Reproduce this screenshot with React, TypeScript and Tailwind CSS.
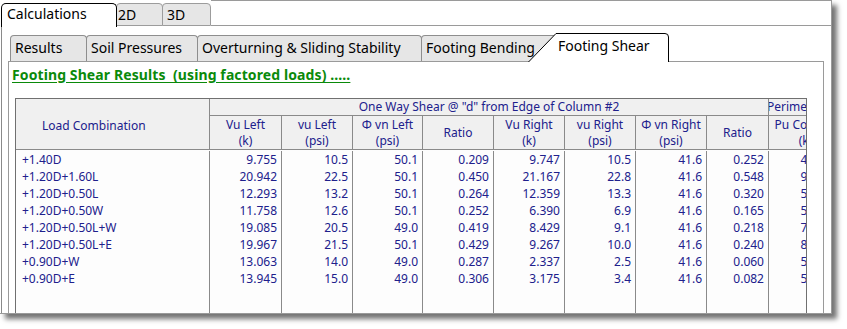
import React from 'react';

const rows: string[][] = [
  ['+1.40D', '9.755', '10.5', '50.1', '0.209', '9.747', '10.5', '41.6', '0.252', '48.631'],
  ['+1.20D+1.60L', '20.942', '22.5', '50.1', '0.450', '21.167', '22.8', '41.6', '0.548', '95.208'],
  ['+1.20D+0.50L', '12.293', '13.2', '50.1', '0.264', '12.359', '13.3', '41.6', '0.320', '56.880'],
  ['+1.20D+0.50W', '11.758', '12.6', '50.1', '0.252', '6.390', '6.9', '41.6', '0.165', '54.330'],
  ['+1.20D+0.50L+W', '19.085', '20.5', '49.0', '0.419', '8.429', '9.1', '41.6', '0.218', '73.114'],
  ['+1.20D+0.50L+E', '19.967', '21.5', '50.1', '0.429', '9.267', '10.0', '41.6', '0.240', '81.902'],
  ['+0.90D+W', '13.063', '14.0', '49.0', '0.287', '2.337', '2.5', '41.6', '0.060', '52.467'],
  ['+0.90D+E', '13.945', '15.0', '49.0', '0.306', '3.175', '3.4', '41.6', '0.082', '55.013'],
];

const heads: [string, string][] = [
  ['Vu Left', '(k)'],
  ['vu Left', '(psi)'],
  ['Φ vn Left', '(psi)'],
  ['Ratio', ''],
  ['Vu Right', '(k)'],
  ['vu Right', '(psi)'],
  ['Φ vn Right', '(psi)'],
  ['Ratio', ''],
  ['Pu Column', '(k)'],
  ['vu Perim', '(psi)'],
];

// widths include each cell's 1px right border
const widths = ['w-[72px]', 'w-[71px]', 'w-[70px]', 'w-[71px]', 'w-[71px]', 'w-[71px]', 'w-[71px]', 'w-[62px]', 'w-[74px]', 'w-[71px]'];

const SubTab: React.FC<{ label: string; w: string; first?: boolean }> = ({ label, w, first }) => (
  <div
    className={`${w} ${first ? 'ml-[2px]' : '-ml-px'} h-[26px] shrink-0 rounded-t-[4px] border border-b-0 border-[#8e8e8e] bg-[#e6e6e6] pl-[4px] pt-[2px] text-[14px] leading-[20px] text-black whitespace-nowrap overflow-hidden`}
  >
    {label}
  </div>
);

const App: React.FC = () => {
  return (
    <div className="w-[847px] h-[329px] bg-white overflow-hidden" style={{ fontFamily: '"Noto Sans", "Open Sans", sans-serif' }}>
      <div className="w-[832px] h-[314px] border-r border-b border-[#9a9a9a] bg-white flex flex-col shadow-[5px_5px_5px_rgba(0,0,0,0.55)]">
        {/* main tabs */}
        <div className="h-[26px] flex items-end shrink-0">
          <div className="ml-px w-[116px] h-[24px] -mb-px relative z-10 rounded-t-[5px] border border-b-0 border-black bg-white pl-[5px] text-[14px] leading-[20px] text-black">
            Calculations
          </div>
          <div className="w-[47px] h-[23px] -ml-px rounded-t-[4px] border border-[#9c9c9c] bg-[#e6e6e6] pl-[1px] text-[14px] leading-[22px] text-black">
            2D
          </div>
          <div className="w-[49px] h-[23px] -ml-px rounded-t-[4px] border border-[#9c9c9c] bg-[#e6e6e6] pl-[4px] text-[14px] leading-[22px] text-black">
            3D
          </div>
          <div className="flex-1 h-full border-t border-b border-[#9a9a9a]" />
        </div>

        {/* calculations panel */}
        <div className="flex-1 min-h-0 ml-px border-l border-[#8a8a8a] pl-[6px] pr-[7px] pt-[7px] flex flex-col">
          {/* sub tabs */}
          <div className="h-[28px] flex items-end shrink-0">
            <SubTab label="Results" w="w-[77px]" first />
            <SubTab label="Soil Pressures" w="w-[112px]" />
            <SubTab label="Overturning & Sliding Stability" w="w-[225px]" />
            <SubTab label="Footing Bending" w="w-[136px]" />
            <div className="relative z-10 -ml-[29px] -mb-px w-[141px] h-[29px] shrink-0">
              <svg className="absolute inset-0" width="141" height="29" viewBox="0 0 141 29">
                <path d="M0.5 29 L28 0.5 H137 Q140.5 0.5 140.5 4 V29" fill="#ffffff" stroke="#000000" strokeWidth="1" />
              </svg>
              <div className="relative pl-[30px] pt-[3px] text-[14px] leading-[20px] text-black whitespace-nowrap">Footing Shear</div>
            </div>
          </div>

          {/* footing shear panel */}
          <div className="flex-1 min-h-0 border border-b-0 border-[#9a9a9a] pl-[3px] flex flex-col overflow-hidden">
            <div className="pt-[3px] h-[36px] shrink-0 text-[14px] leading-[19px] font-bold tracking-[0.1px] text-[#0a8a0a] underline underline-offset-2 whitespace-nowrap">
              Footing Shear Results&nbsp; (using factored loads) .....
            </div>

            {/* grid */}
            <div className="ml-[3px] w-[792px] flex-1 border border-b-0 border-[#707070] overflow-hidden bg-[#fdfdfd] flex flex-col text-[12px] text-[#20208c]">
              <div className="flex shrink-0 bg-[#f0f0f0] w-max">
                <div className="w-[194px] h-[51px] shrink-0 border-r border-b border-[#8a8a8a] flex items-center pl-[26px] pt-[3px] whitespace-nowrap">
                  Load Combination
                </div>
                <div className="flex flex-col">
                  <div className="flex h-[17px]">
                    <div className="w-[559px] border-r border-b border-[#8a8a8a] text-center leading-[16px]">
                      One Way Shear @ "d" from Edge of Column #2
                    </div>
                    <div className="w-[145px] border-b border-[#8a8a8a] leading-[16px] -indent-[2px] whitespace-nowrap overflow-hidden">
                      Perimeter Shear Check
                    </div>
                  </div>
                  <div className="flex h-[34px]">
                    {heads.map(([a, b], i) => (
                      <div
                        key={i}
                        className={`${widths[i]} shrink-0 border-r border-b border-[#8a8a8a] flex flex-col items-center justify-center leading-[16px] whitespace-nowrap`}
                      >
                        <span>{a}</span>
                        {b && <span>{b}</span>}
                      </div>
                    ))}
                  </div>
                </div>
              </div>

              <div className="flex-1 flex flex-col w-max">
                {rows.map((r, ri) => (
                  <div key={ri} className={`flex h-[17px] leading-[17px] ${ri === 0 ? 'mt-px' : ''}`}>
                    <div className="w-[194px] shrink-0 border-r border-[#8a8a8a] pl-[6px] whitespace-nowrap">{r[0]}</div>
                    {r.slice(1).map((v, ci) => (
                      <div key={ci} className={`${widths[ci]} shrink-0 border-r border-[#8a8a8a] pr-[4px] text-right`}>
                        {v}
                      </div>
                    ))}
                    <div className={`${widths[9]} shrink-0 border-r border-[#8a8a8a] pr-[4px] text-right`}>12.4</div>
                  </div>
                ))}
                <div className="flex flex-1">
                  <div className="w-[194px] shrink-0 border-r border-[#8a8a8a]" />
                  {widths.map((w, i) => (
                    <div key={i} className={`${w} shrink-0 border-r border-[#8a8a8a]`} />
                  ))}
                </div>
              </div>
            </div>
          </div>
        </div>
      </div>
    </div>
  );
};

export default App;
